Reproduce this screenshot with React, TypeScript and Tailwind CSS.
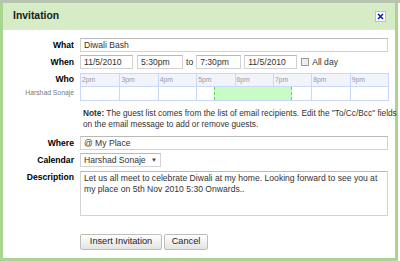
import React from "react";

const inputCls =
  "h-[14px] border border-[#d2d2d2] border-t-[#b9b9b9] bg-white pl-[3px] text-[8.6px] leading-[12px] text-[#333] whitespace-nowrap overflow-hidden";

export default function App() {
  const hours = ["2pm", "3pm", "4pm", "5pm", "6pm", "7pm", "8pm", "9pm"];
  return (
    <div className="w-[400px] h-[261px] bg-white overflow-hidden font-['Liberation_Sans',Arial,sans-serif] text-black">
      <div className="h-[3px] bg-[#b7c4b0]" />
      <div className="w-[398px] h-[258px] border-[3px] border-t-0 border-[#a8d690] flex flex-col">
        {/* header */}
        <div className="h-[27px] bg-[#d5ecc7] flex items-center justify-between pl-[10px] pr-[9px]">
          <span className="text-[10.4px] font-bold text-[#1a1a1a] leading-none">Invitation</span>
          <div className="w-[11px] h-[11px] bg-white border border-[#a8d690] flex items-center justify-center">
            <svg width="7" height="7" viewBox="0 0 7 7">
              <path d="M1 1 L6 6 M6 1 L1 6" stroke="#1010d0" strokeWidth="1.5" />
            </svg>
          </div>
        </div>
        {/* body */}
        <div className="flex-1 bg-white pt-[8px] text-[8.6px]">
          {/* What */}
          <div className="flex items-center">
            <div className="w-[71px] text-right font-bold leading-[14px]">What</div>
            <div className={`ml-[6px] w-[308px] ${inputCls}`}>Diwali Bash</div>
          </div>
          {/* When */}
          <div className="flex items-center mt-[3px]">
            <div className="w-[71px] text-right font-bold leading-[14px]">When</div>
            <div className="ml-[6px] flex items-center">
              <div className={`w-[53px] ${inputCls}`}>11/5/2010</div>
              <div className={`ml-[4px] w-[46px] ${inputCls}`}>5:30pm</div>
              <span className="mx-[3px] text-[#333] leading-[14px]">to</span>
              <div className={`w-[45px] ${inputCls}`}>7:30pm</div>
              <div className={`ml-[3px] w-[53px] ${inputCls}`}>11/5/2010</div>
              <div className="ml-[4px] w-[8px] h-[8px] border border-[#9a9a9a] bg-[#eeeeee]" />
              <span className="ml-[3px] text-[#333] leading-[14px]">All day</span>
            </div>
          </div>
          {/* Who */}
          <div className="flex mt-[4px]">
            <div className="w-[71px] flex flex-col items-end">
              <div className="h-[13px] leading-[13px] font-bold">Who</div>
              <div className="h-[14px] leading-[14px] text-[6.8px] text-[#7a7a7a]">Harshad Sonaje</div>
            </div>
            <div className="ml-[6px] w-[309px] border border-[#c9d8f6]">
              <div className="grid grid-cols-8 h-[13px] bg-[#f1f4fb] border-b border-[#c9d8f6]">
                {hours.map((h, i) => (
                  <div
                    key={h}
                    className={`pl-[1px] text-[6.8px] leading-[12px] text-[#9a9a9a] ${i > 0 ? "border-l border-[#c9d8f6]" : ""}`}
                  >
                    {h}
                  </div>
                ))}
              </div>
              <div className="relative grid grid-cols-8 h-[13px]">
                {hours.map((h, i) => (
                  <div key={h} className={i > 0 ? "border-l border-[#c9d8f6]" : ""} />
                ))}
                <div className="absolute top-0 bottom-0 left-[133px] w-[78px] bg-[#c9fcc5] border-x border-dashed border-[#5fd85f]" />
              </div>
            </div>
          </div>
          {/* Note */}
          <div className="ml-[80px] mt-[7px] text-[8.3px] leading-[11px] text-[#333] whitespace-nowrap">
            <span className="font-bold">Note:</span> The guest list comes from the list of email recipients. Edit the "To/Cc/Bcc" fields
            <br />
            on the email message to add or remove guests.
          </div>
          {/* Where */}
          <div className="flex items-center mt-[6px]">
            <div className="w-[71px] text-right font-bold leading-[14px]">Where</div>
            <div className={`ml-[6px] w-[308px] ${inputCls}`}>@ My Place</div>
          </div>
          {/* Calendar */}
          <div className="flex items-center mt-[3px]">
            <div className="w-[71px] text-right font-bold leading-[14px]">Calendar</div>
            <div className={`ml-[6px] w-[81px] flex items-center justify-between pr-[3px] ${inputCls}`}>
              <span>Harshad Sonaje</span>
              <span className="text-[6px] text-[#444]">▼</span>
            </div>
          </div>
          {/* Description */}
          <div className="flex mt-[4px]">
            <div className="w-[71px] text-right font-bold leading-[12px]">Description</div>
            <div className="ml-[6px] w-[308px] h-[45px] border border-[#d2d2d2] border-t-[#b9b9b9] pl-[3px] pt-[1px] text-[8.6px] leading-[11px] text-[#333]">
              Let us all meet to celebrate Diwali at my home. Looking forward to see you at
              <br />
              my place on 5th Nov 2010 5:30 Onwards..
            </div>
          </div>
          {/* Buttons */}
          <div className="flex ml-[77px] mt-[18px] gap-[2px]">
            <div className="w-[82px] h-[16px] flex items-center justify-center border border-[#bdbdbd] rounded-[2px] bg-gradient-to-b from-white to-[#e3e3e3] text-[9.2px] text-[#222]">
              Insert Invitation
            </div>
            <div className="w-[44px] h-[16px] flex items-center justify-center border border-[#bdbdbd] rounded-[2px] bg-gradient-to-b from-white to-[#e3e3e3] text-[9.2px] text-[#222]">
              Cancel
            </div>
          </div>
        </div>
      </div>
    </div>
  );
}
